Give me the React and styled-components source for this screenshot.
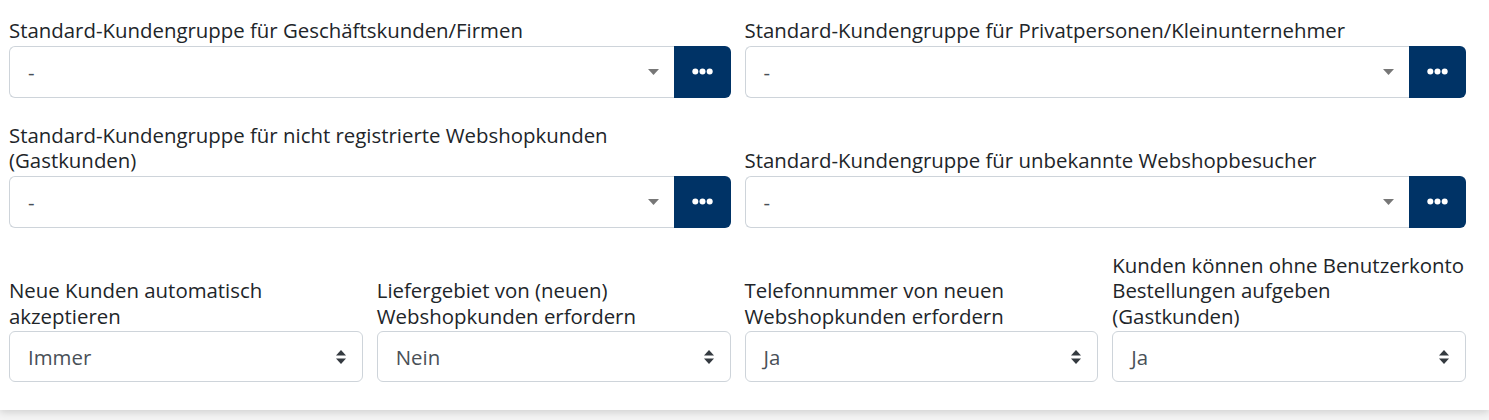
import React from "react";
import styled, { createGlobalStyle } from "styled-components";

const GlobalStyle = createGlobalStyle`
  html, body {
    margin: 0;
    padding: 0;
    background: #f4f4f4;
    font-family: "Open Sans", "Noto Sans", sans-serif;
    color: #212529;
  }
`;

const Page = styled.div`
  width: 1489px;
  height: 420px;
  background: #f4f4f4;
  overflow: hidden;
`;

const Card = styled.div`
  background: #fff;
  box-shadow: 0 2px 8px rgba(0, 0, 0, 0.16);
  padding: 18px 23px 28px 9px;
`;

const Grid = styled.div`
  display: grid;
  grid-template-columns: repeat(4, 1fr);
  column-gap: 14px;
  row-gap: 25px;
`;

const Field = styled.div`
  grid-column: span ${(p) => p.span || 1};
  display: flex;
  flex-direction: column;
  justify-content: flex-end;
  min-width: 0;
`;

const Label = styled.label`
  font-size: 20.4px;
  line-height: 25.5px;
  color: #212529;
  margin-bottom: 2px;
  white-space: pre-line;
`;

const InputGroup = styled.div`
  display: flex;
  height: ${(p) => p.h || 52}px;
`;

const SelectBox = styled.div`
  position: relative;
  flex: 1;
  display: flex;
  align-items: center;
  box-sizing: border-box;
  border: 1px solid #ced4da;
  border-radius: ${(p) => (p.grouped ? "6px 0 0 6px" : "6px")};
  border-right: ${(p) => (p.grouped ? "none" : "1px solid #ced4da")};
  padding: 0 40px 0 18px;
  font-size: 20.4px;
  color: #495057;
  background: #fff;
`;

const Caret = styled.svg`
  position: absolute;
  right: ${(p) => p.right}px;
  top: 50%;
  transform: translateY(-50%);
`;

const DotsButton = styled.button`
  width: 57px;
  border: none;
  border-radius: 0 6px 6px 0;
  background: #003366;
  display: flex;
  align-items: center;
  justify-content: center;
  padding: 0;
  cursor: pointer;
`;

const Dots = () => (
  <svg width="21" height="7" viewBox="0 0 21 7">
    <circle cx="3.3" cy="3.5" r="3" fill="#fff" />
    <circle cx="10.5" cy="3.5" r="3" fill="#fff" />
    <circle cx="17.7" cy="3.5" r="3" fill="#fff" />
  </svg>
);

const LookupSelect = ({ value }) => (
  <InputGroup>
    <SelectBox grouped>
      {value}
      <Caret right={15} width="11" height="6" viewBox="0 0 11 6">
        <path d="M0 0h11L5.5 6z" fill="#777" />
      </Caret>
    </SelectBox>
    <DotsButton>
      <Dots />
    </DotsButton>
  </InputGroup>
);

const PlainSelect = ({ value }) => (
  <InputGroup h={51}>
    <SelectBox>
      {value}
      <Caret right={16} width="10" height="14" viewBox="0 0 10 14">
        <path d="M5 0l5 5.5H0z" fill="#343a40" />
        <path d="M5 14l5-5.5H0z" fill="#343a40" />
      </Caret>
    </SelectBox>
  </InputGroup>
);

const lookups = [
  "Standard-Kundengruppe für Geschäftskunden/Firmen",
  "Standard-Kundengruppe für Privatpersonen/Kleinunternehmer",
  "Standard-Kundengruppe für nicht registrierte Webshopkunden (Gastkunden)",
  "Standard-Kundengruppe für unbekannte Webshopbesucher",
];

const options = [
  { label: "Neue Kunden automatisch akzeptieren", value: "Immer" },
  { label: "Liefergebiet von (neuen) Webshopkunden erfordern", value: "Nein" },
  { label: "Telefonnummer von neuen Webshopkunden erfordern", value: "Ja" },
  {
    label: "Kunden können ohne Benutzerkonto Bestellungen aufgeben\n(Gastkunden)",
    value: "Ja",
  },
];

export default function App() {
  return (
    <Page>
      <GlobalStyle />
      <Card>
        <Grid>
          {lookups.map((l) => (
            <Field span={2} key={l}>
              <Label>{l}</Label>
              <LookupSelect value="-" />
            </Field>
          ))}
          {options.map((o) => (
            <Field key={o.label}>
              <Label>{o.label}</Label>
              <PlainSelect value={o.value} />
            </Field>
          ))}
        </Grid>
      </Card>
    </Page>
  );
}
